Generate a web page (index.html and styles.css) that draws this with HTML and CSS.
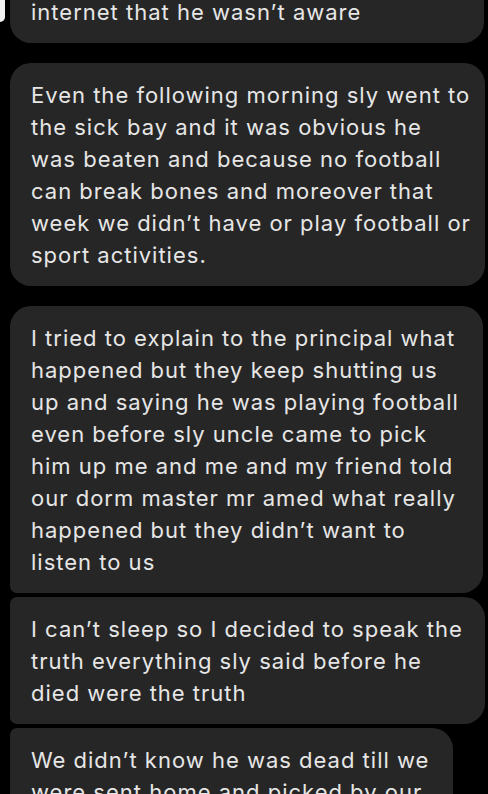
FILE: index.html
```html
<!DOCTYPE html>
<html>
    <head>
        <meta charset="UTF-8">
        <meta name="viewport" content="width=device-width, initial-scale=1.0">
        <title>Messages</title>
        <link rel="stylesheet" href="styles.css">
    </head>
    <body>
        <div class="edge"></div>
        <div class="thread">
            <div class="bubble full">internet that he wasn’t aware</div>

            <div class="bubble">Even the following morning sly went to<br>
                the sick bay and it was obvious he<br>
                was beaten and because no football<br>
                can break bones and moreover that<br>
                week we didn’t have or play football or<br>
                sport activities.</div>

            <div class="group">
                <div class="bubble">I tried to explain to the principal what<br>
                    happened but they keep shutting us<br>
                    up and saying he was playing football<br>
                    even before sly uncle came to pick<br>
                    him up me and me and my friend told<br>
                    our dorm master mr amed what really<br>
                    happened but they didn’t want to<br>
                    listen to us</div>
                <div class="bubble">I can’t sleep so I decided to speak the<br>
                    truth everything sly said before he<br>
                    died were the truth</div>
                <div class="bubble">We didn’t know he was dead till we<br>
                    were sent home and picked by our</div>
            </div>
        </div>
    </body>
</html>
```

FILE: styles.css
```css
html, body{
    margin: 0;
    background-color: #000;
}
body{
    position: relative;
    height: 794px;
    overflow: hidden;
    font-family: Inter, "Liberation Sans", sans-serif;
}
.edge{
    position: absolute;
    top: 0;
    left: 0;
    width: 5px;
    height: 22px;
    background-color: #f2f2f2;
    border-bottom-right-radius: 5px;
}
.thread{
    display: flex;
    flex-direction: column;
    align-items: flex-start;
    gap: 20px;
    margin-top: -20px;
    padding-left: 10px;
}
.group{
    display: flex;
    flex-direction: column;
    align-items: flex-start;
    gap: 4px;
}
.bubble{
    box-sizing: border-box;
    max-width: 475px;
    padding: 16px 24px 15px 21px;
    border-radius: 21px;
    background-color: #262626;
    color: #e6e6e6;
    font-size: 22px;
    letter-spacing: 1px;
    line-height: 32px;
    white-space: nowrap;
}
.bubble.full{
    width: 474px;
}
.group .bubble:first-child{
    border-bottom-left-radius: 7px;
}
.group .bubble + .bubble{
    border-top-left-radius: 7px;
    border-bottom-left-radius: 7px;
}
```
